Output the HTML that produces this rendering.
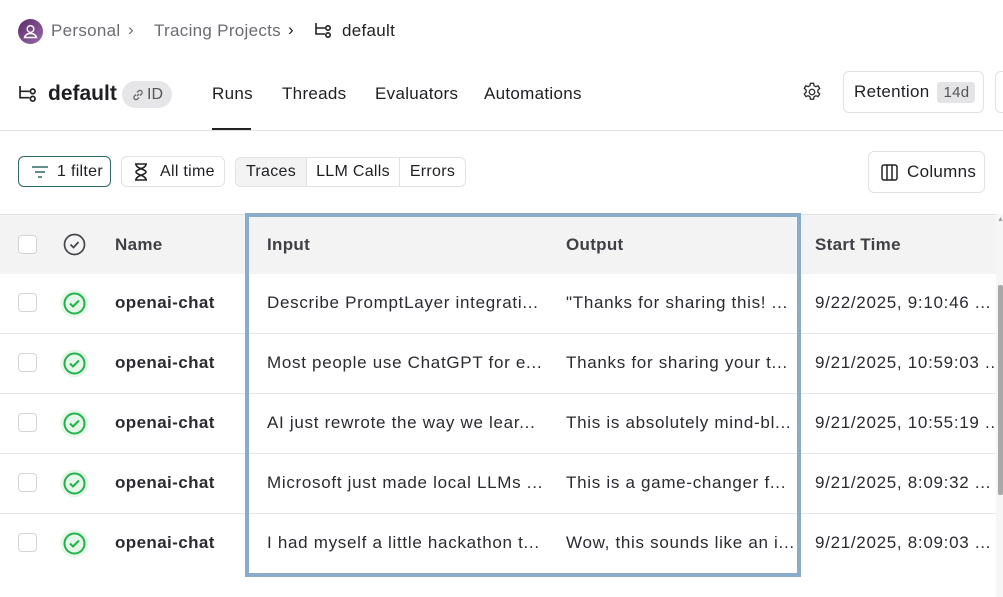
<!DOCTYPE html>
<html><head><style>
*{box-sizing:border-box;margin:0;padding:0}
body{width:1003px;height:597px;overflow:hidden;background:#fff;font-family:"Liberation Sans",sans-serif;color:#1f1f23;position:relative}
.abs{position:absolute}
.t{font-size:17px;white-space:nowrap;letter-spacing:0.3px}
.btn{position:absolute;border:1px solid #e2e2e6;border-radius:6px;background:#fff;display:flex;align-items:center;font-size:16px;letter-spacing:0.3px}
.row{position:absolute;left:0;width:996px;height:60px;border-bottom:1px solid #e6e6e9}
.cb{position:absolute;left:18px;width:19px;height:19px;border:1px solid #d4d4d8;border-radius:4px;background:#fff}
.cell{position:absolute;font-size:17px;white-space:nowrap;color:#2a2a30;letter-spacing:0.7px;overflow:hidden}
</style></head><body>
<div class="abs" style="left:18px;top:19px;width:25px;height:25px;border-radius:50%;background:linear-gradient(135deg,#5a2a6a,#9a6aa8)">
<svg width="25" height="25" viewBox="0 0 25 25"><circle cx="12.5" cy="10" r="3.3" fill="none" stroke="#fff" stroke-width="1.4"/><path d="M6.5 18.5c1-3 3.5-4 6-4s5 1 6 4z" fill="none" stroke="#fff" stroke-width="1.4"/></svg></div>
<div class="abs t" style="left:51px;top:21px;color:#6b6b72">Personal</div>
<div class="abs t" style="left:128px;top:20px;color:#6b6b72">›</div>
<div class="abs t" style="left:154px;top:21px;color:#6b6b72">Tracing Projects</div>
<div class="abs t" style="left:288px;top:20px;color:#222">›</div>
<svg class="abs" style="left:315px;top:22px" width="18" height="18" viewBox="0 0 18 18" fill="none" stroke="#222" stroke-width="1.6"><path d="M1 1v11h9M1 6h9"/><circle cx="13" cy="6" r="2.2"/><circle cx="13" cy="13" r="2.2"/></svg>
<div class="abs t" style="left:342px;top:21px;color:#222">default</div>
<svg class="abs" style="left:19px;top:85px" width="19" height="19" viewBox="0 0 18 18" fill="none" stroke="#222" stroke-width="1.6"><path d="M1 1v11h9M1 6h9"/><circle cx="13" cy="6" r="2.2"/><circle cx="13" cy="13" r="2.2"/></svg>
<div class="abs" style="left:48px;top:82px;font-size:21px;font-weight:bold">default</div>
<div class="abs" style="left:122px;top:81px;width:50px;height:27px;border-radius:14px;background:#e6e6e9;font-size:16px;color:#555;display:flex;align-items:center;padding-left:9px">
<svg width="14" height="14" viewBox="0 0 14 14" fill="none" stroke="#666" stroke-width="1.3"><path d="M6 8l2-2M5 6.5L3.5 8a2 2 0 003 3L8 9.5M9 7.5L10.5 6a2 2 0 00-3-3L6 4.5"/></svg><span style="margin-left:2px">ID</span></div>
<div class="abs t" style="left:212px;top:84px">Runs</div>
<div class="abs t" style="left:282px;top:84px">Threads</div>
<div class="abs t" style="left:375px;top:84px">Evaluators</div>
<div class="abs t" style="left:484px;top:84px">Automations</div>
<div class="abs" style="left:212px;top:128px;width:39px;height:2px;background:#222"></div>
<div class="abs" style="left:0;top:130px;width:1003px;height:1px;background:#e2e2e6"></div>
<svg class="abs" style="left:801px;top:81px" width="22" height="22" viewBox="0 0 24 24" fill="none" stroke="#333" stroke-width="1.5"><circle cx="12" cy="12" r="3"/><path d="M10.3 2.5h3.4l.5 2.6 2 1.1 2.5-.9 1.7 2.9-2 1.8v2.3l2 1.8-1.7 2.9-2.5-.9-2 1.1-.5 2.6h-3.4l-.5-2.6-2-1.1-2.5.9-1.7-2.9 2-1.8V9.9l-2-1.8 1.7-2.9 2.5.9 2-1.1z"/></svg>
<div class="btn" style="left:843px;top:71px;width:141px;height:42px;padding-left:10px;font-size:17px">Retention<span style="margin-left:8px;background:#e4e4e7;border-radius:3px;padding:2px 6px;font-size:15px;color:#555">14d</span></div>
<div class="btn" style="left:995px;top:71px;width:30px;height:42px"></div>
<div class="btn" style="left:18px;top:156px;width:93px;height:31px;border-color:#2f6b62;padding-left:12px"><svg width="18" height="14" viewBox="0 0 18 14" stroke="#2f6b62" stroke-width="1.5"><path d="M1 2h16M4 7h10M7 12h4"/></svg><span style="margin-left:8px">1 filter</span></div>
<div class="btn" style="left:121px;top:156px;width:104px;height:31px;padding-left:12px"><svg width="14" height="18" viewBox="0 0 14 18" fill="none" stroke="#222" stroke-width="1.6"><path d="M1 1h12M1 17h12M2 1c0 5 10 5 10 8s-10 3-10 8M12 1c0 5-10 5-10 8s10 3 10 8"/></svg><span style="margin-left:12px">All time</span></div>
<div class="btn" style="left:235px;top:157px;width:231px;height:30px;overflow:hidden">
<div style="width:71px;height:100%;background:#f3f3f4;border-right:1px solid #e2e2e6;display:flex;align-items:center;justify-content:center">Traces</div>
<div style="width:93px;height:100%;border-right:1px solid #e2e2e6;display:flex;align-items:center;justify-content:center">LLM Calls</div>
<div style="flex:1;display:flex;align-items:center;justify-content:center">Errors</div></div>
<div class="btn" style="left:868px;top:151px;width:117px;height:42px;padding-left:12px;font-size:17px"><svg width="17" height="17" viewBox="0 0 17 17" fill="none" stroke="#222" stroke-width="1.5"><rect x="1" y="1" width="15" height="15" rx="2"/><path d="M6 1v15M11 1v15"/></svg><span style="margin-left:9px">Columns</span></div>
<div class="abs" style="left:0;top:214px;width:996px;height:60px;background:#f3f3f3;border-top:1px solid #e2e2e6"></div>
<div class="cb" style="top:235px"></div>
<svg class="abs" style="left:63px;top:233px" width="23" height="23" viewBox="0 0 23 23" fill="none" stroke="#44444c" stroke-width="1.7"><circle cx="11.5" cy="11.5" r="10"/><path d="M7.5 11.5l3 3 5-5.5"/></svg>
<div class="cell" style="left:115px;top:235px;font-weight:bold;color:#3f3f46;letter-spacing:0.3px">Name</div>
<div class="cell" style="left:267px;top:235px;font-weight:bold;color:#3f3f46;letter-spacing:0.3px">Input</div>
<div class="cell" style="left:566px;top:235px;font-weight:bold;color:#3f3f46;letter-spacing:0.3px">Output</div>
<div class="cell" style="left:815px;top:235px;font-weight:bold;color:#3f3f46;letter-spacing:0.3px">Start Time</div>
<div class="row" style="top:274px"></div><div class="row" style="top:334px"></div><div class="row" style="top:394px"></div><div class="row" style="top:454px"></div><div class="row" style="top:514px;border-bottom:none"></div>
<div class="cb" style="top:293px"></div><div class="cb" style="top:353px"></div><div class="cb" style="top:413px"></div><div class="cb" style="top:473px"></div><div class="cb" style="top:533px"></div>
<svg class="abs" style="left:60px;top:289px" width="29" height="29" viewBox="0 0 29 29"><circle cx="14.5" cy="14.5" r="14" fill="#e6f7ea"/><circle cx="14.5" cy="14.5" r="10" fill="none" stroke="#22b24c" stroke-width="2"/><path d="M10 14.5l3 3 6-6" fill="none" stroke="#22b24c" stroke-width="2"/></svg>
<svg class="abs" style="left:60px;top:349px" width="29" height="29" viewBox="0 0 29 29"><circle cx="14.5" cy="14.5" r="14" fill="#e6f7ea"/><circle cx="14.5" cy="14.5" r="10" fill="none" stroke="#22b24c" stroke-width="2"/><path d="M10 14.5l3 3 6-6" fill="none" stroke="#22b24c" stroke-width="2"/></svg>
<svg class="abs" style="left:60px;top:409px" width="29" height="29" viewBox="0 0 29 29"><circle cx="14.5" cy="14.5" r="14" fill="#e6f7ea"/><circle cx="14.5" cy="14.5" r="10" fill="none" stroke="#22b24c" stroke-width="2"/><path d="M10 14.5l3 3 6-6" fill="none" stroke="#22b24c" stroke-width="2"/></svg>
<svg class="abs" style="left:60px;top:469px" width="29" height="29" viewBox="0 0 29 29"><circle cx="14.5" cy="14.5" r="14" fill="#e6f7ea"/><circle cx="14.5" cy="14.5" r="10" fill="none" stroke="#22b24c" stroke-width="2"/><path d="M10 14.5l3 3 6-6" fill="none" stroke="#22b24c" stroke-width="2"/></svg>
<svg class="abs" style="left:60px;top:529px" width="29" height="29" viewBox="0 0 29 29"><circle cx="14.5" cy="14.5" r="14" fill="#e6f7ea"/><circle cx="14.5" cy="14.5" r="10" fill="none" stroke="#22b24c" stroke-width="2"/><path d="M10 14.5l3 3 6-6" fill="none" stroke="#22b24c" stroke-width="2"/></svg>
<div class="cell" style="left:115px;top:293px;font-weight:bold;letter-spacing:0.4px">openai-chat</div>
<div class="cell" style="left:115px;top:353px;font-weight:bold;letter-spacing:0.4px">openai-chat</div>
<div class="cell" style="left:115px;top:413px;font-weight:bold;letter-spacing:0.4px">openai-chat</div>
<div class="cell" style="left:115px;top:473px;font-weight:bold;letter-spacing:0.4px">openai-chat</div>
<div class="cell" style="left:115px;top:533px;font-weight:bold;letter-spacing:0.4px">openai-chat</div>
<div class="cell" style="left:267px;top:293px">Describe PromptLayer integrati...</div>
<div class="cell" style="left:267px;top:353px">Most people use ChatGPT for e...</div>
<div class="cell" style="left:267px;top:413px">AI just rewrote the way we lear...</div>
<div class="cell" style="left:267px;top:473px">Microsoft just made local LLMs ...</div>
<div class="cell" style="left:267px;top:533px">I had myself a little hackathon t...</div>
<div class="cell" style="left:566px;top:293px">"Thanks for sharing this! ...</div>
<div class="cell" style="left:566px;top:353px">Thanks for sharing your t...</div>
<div class="cell" style="left:566px;top:413px">This is absolutely mind-bl...</div>
<div class="cell" style="left:566px;top:473px">This is a game-changer f...</div>
<div class="cell" style="left:566px;top:533px">Wow, this sounds like an i...</div>
<div class="cell" style="left:815px;top:293px;width:181px">9/22/2025, 9:10:46 ...</div>
<div class="cell" style="left:815px;top:353px;width:181px">9/21/2025, 10:59:03 ...</div>
<div class="cell" style="left:815px;top:413px;width:181px">9/21/2025, 10:55:19 ...</div>
<div class="cell" style="left:815px;top:473px;width:181px">9/21/2025, 8:09:32 ...</div>
<div class="cell" style="left:815px;top:533px;width:181px">9/21/2025, 8:09:03 ...</div>
<div class="abs" style="left:245px;top:213px;width:556px;height:364px;border:4px solid #8aaccc"></div>
<div class="abs" style="left:996px;top:214px;width:7px;height:383px;background:#f6f6f6"></div>
<div class="abs" style="left:997px;top:216px;font-size:7px;color:#a0a0a0">▲</div>
<div class="abs" style="left:998px;top:285px;width:5px;height:210px;background:#a8a8a8;border-radius:2px"></div>
</body></html>
